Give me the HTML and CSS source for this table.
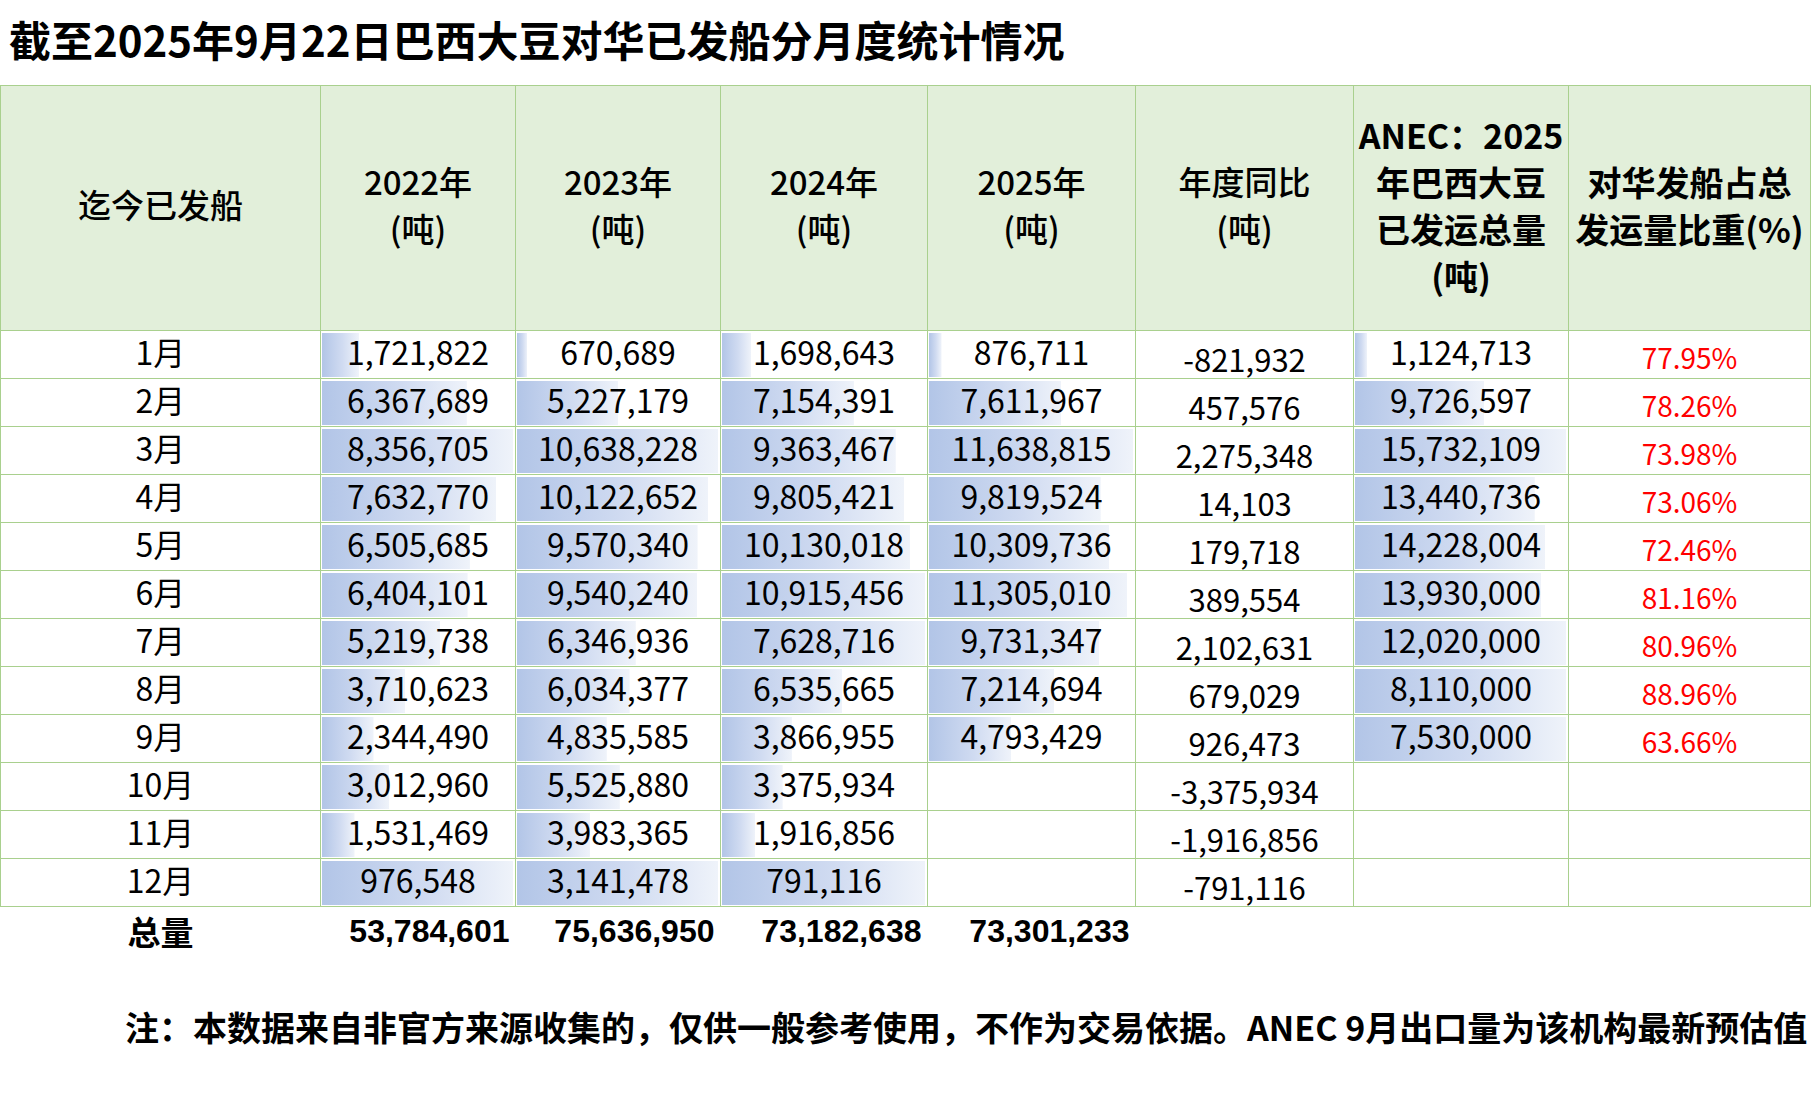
FILE: index.html
```html
<!DOCTYPE html>
<html lang="zh-CN">
<head>
<meta charset="utf-8">
<title>巴西大豆对华已发船分月度统计情况</title>
<link rel="stylesheet" href="styles.css">
</head>
<body>
<h1 class="title">截至2025年9月22日巴西大豆对华已发船分月度统计情况</h1>
<table class="sheet">
  <colgroup>
    <col class="c0"><col class="c1"><col class="c2"><col class="c3"><col class="c4"><col class="c5"><col class="c6"><col class="c7">
  </colgroup>
  <thead>
    <tr class="head">
      <th>迄今已发船</th>
      <th>2022年<br>(吨)</th>
      <th>2023年<br>(吨)</th>
      <th>2024年<br>(吨)</th>
      <th>2025年<br>(吨)</th>
      <th>年度同比<br>(吨)</th>
      <th class="strong">ANEC：2025<br>年巴西大豆<br>已发运总量<br>(吨)</th>
      <th class="strong">对华发船占总<br>发运量比重(%)</th>
    </tr>
  </thead>
  <tbody>
    <tr><td class="m">1月</td><td class="b" style="--w:20.6%">1,721,822</td><td class="b" style="--w:6.6%">670,689</td><td class="b" style="--w:15.6%">1,698,643</td><td class="b" style="--w:7.5%">876,711</td><td class="y">-821,932</td><td class="b" style="--w:7.1%">1,124,713</td><td class="p">77.95%</td></tr>
    <tr><td class="m">2月</td><td class="b" style="--w:76.2%">6,367,689</td><td class="b" style="--w:51%">5,227,179</td><td class="b" style="--w:65.5%">7,154,391</td><td class="b" style="--w:65.4%">7,611,967</td><td class="y">457,576</td><td class="b" style="--w:61.8%">9,726,597</td><td class="p">78.26%</td></tr>
    <tr><td class="m">3月</td><td class="b" style="--w:100%">8,356,705</td><td class="b" style="--w:100%">10,638,228</td><td class="b" style="--w:85.8%">9,363,467</td><td class="b" style="--w:100%">11,638,815</td><td class="y">2,275,348</td><td class="b" style="--w:100%">15,732,109</td><td class="p">73.98%</td></tr>
    <tr><td class="m">4月</td><td class="b" style="--w:91.3%">7,632,770</td><td class="b" style="--w:95.2%">10,122,652</td><td class="b" style="--w:89.8%">9,805,421</td><td class="b" style="--w:84.4%">9,819,524</td><td class="y">14,103</td><td class="b" style="--w:85.4%">13,440,736</td><td class="p">73.06%</td></tr>
    <tr><td class="m">5月</td><td class="b" style="--w:77.8%">6,505,685</td><td class="b" style="--w:90%">9,570,340</td><td class="b" style="--w:92.8%">10,130,018</td><td class="b" style="--w:88.6%">10,309,736</td><td class="y">179,718</td><td class="b" style="--w:90.4%">14,228,004</td><td class="p">72.46%</td></tr>
    <tr><td class="m">6月</td><td class="b" style="--w:76.6%">6,404,101</td><td class="b" style="--w:89.7%">9,540,240</td><td class="b" style="--w:100%">10,915,456</td><td class="b" style="--w:97.1%">11,305,010</td><td class="y">389,554</td><td class="b" style="--w:88.5%">13,930,000</td><td class="p">81.16%</td></tr>
    <tr><td class="m">7月</td><td class="b" style="--w:62.5%">5,219,738</td><td class="b" style="--w:59.7%">6,346,936</td><td class="b" style="--w:100%">7,628,716</td><td class="b" style="--w:83.6%">9,731,347</td><td class="y">2,102,631</td><td class="b" style="--w:100%">12,020,000</td><td class="p">80.96%</td></tr>
    <tr><td class="m">8月</td><td class="b" style="--w:44.4%">3,710,623</td><td class="b" style="--w:56.7%">6,034,377</td><td class="b" style="--w:59.9%">6,535,665</td><td class="b" style="--w:62%">7,214,694</td><td class="y">679,029</td><td class="b" style="--w:100%">8,110,000</td><td class="p">88.96%</td></tr>
    <tr><td class="m">9月</td><td class="b" style="--w:28.1%">2,344,490</td><td class="b" style="--w:45.5%">4,835,585</td><td class="b" style="--w:35.4%">3,866,955</td><td class="b" style="--w:41.2%">4,793,429</td><td class="y">926,473</td><td class="b" style="--w:100%">7,530,000</td><td class="p">63.66%</td></tr>
    <tr><td class="m">10月</td><td class="b" style="--w:36.1%">3,012,960</td><td class="b" style="--w:51.9%">5,525,880</td><td class="b" style="--w:30.9%">3,375,934</td><td></td><td class="y">-3,375,934</td><td></td><td></td></tr>
    <tr><td class="m">11月</td><td class="b" style="--w:18.3%">1,531,469</td><td class="b" style="--w:37.4%">3,983,365</td><td class="b" style="--w:17.6%">1,916,856</td><td></td><td class="y">-1,916,856</td><td></td><td></td></tr>
    <tr><td class="m">12月</td><td class="b" style="--w:100%">976,548</td><td class="b" style="--w:100%">3,141,478</td><td class="b" style="--w:100%">791,116</td><td></td><td class="y">-791,116</td><td></td><td></td></tr>
    <tr class="total"><td class="tl">总量</td><td class="tv">53,784,601</td><td class="tv">75,636,950</td><td class="tv">73,182,638</td><td class="tv">73,301,233</td><td></td><td></td><td></td></tr>
  </tbody>
</table>
<p class="note">注：本数据来自非官方来源收集的，仅供一般参考使用，不作为交易依据。ANEC 9月出口量为该机构最新预估值</p>
</body>
</html>
```

FILE: styles.css
```css
html, body {
  margin: 0;
  padding: 0;
  background: #ffffff;
}

body {
  font-family: "Noto Sans CJK SC", "Noto Sans", sans-serif;
  color: #000000;
  width: 1812px;
}

.title {
  margin: 0;
  height: 85px;
  padding-left: 9px;
  font-size: 42px;
  font-weight: 700;
  line-height: 77px;
  white-space: nowrap;
}

.sheet {
  border-collapse: collapse;
  table-layout: fixed;
  width: 1810px;
}

.c0 { width: 320px; }
.c1 { width: 195px; }
.c2 { width: 205px; }
.c3 { width: 207px; }
.c4 { width: 208px; }
.c5 { width: 218px; }
.c6 { width: 215px; }
.c7 { width: 242px; }

.sheet th,
.sheet td {
  border: 1px solid #a9d08e;
  padding: 0;
  text-align: center;
  vertical-align: middle;
  white-space: nowrap;
}

.head {
  height: 245px;
}

.head th {
  background: #e2efda;
  font-size: 33px;
  font-weight: 500;
  line-height: 47px;
  padding-bottom: 7px;
}

.head th.strong {
  font-size: 34px;
  font-weight: 700;
}

.sheet tbody tr {
  height: 48px;
}

.sheet td {
  font-size: 32px;
  line-height: 40px;
  padding-bottom: 7px;
}

.sheet td.b {
  background-image: linear-gradient(to right, #b2c5e7 0%, #d0dbf1 55%, #eff3fa 100%);
  background-repeat: no-repeat;
  background-position: 1px 2px;
  background-size: calc(var(--w) - 3px) 44px;
}

.sheet td.y {
  font-size: 31px;
  padding-top: 9px;
  padding-bottom: 0;
  line-height: 34px;
}

.sheet td.p {
  color: #ff0000;
  font-size: 28px;
  padding-top: 5px;
  padding-bottom: 0;
  line-height: 38px;
}

.sheet tr.total td {
  border: none;
  height: 48px;
  padding-bottom: 0;
}

.sheet td.tl {
  font-size: 33px;
  font-weight: 700;
}

.sheet td.tv {
  font-family: "Liberation Sans", Arial, sans-serif;
  font-size: 32px;
  font-weight: 700;
  text-align: right;
  padding-right: 6px;
}

.note {
  margin: 48px 0 0 0;
  padding-left: 125px;
  font-size: 34px;
  font-weight: 700;
  line-height: 48px;
  white-space: nowrap;
}
```
